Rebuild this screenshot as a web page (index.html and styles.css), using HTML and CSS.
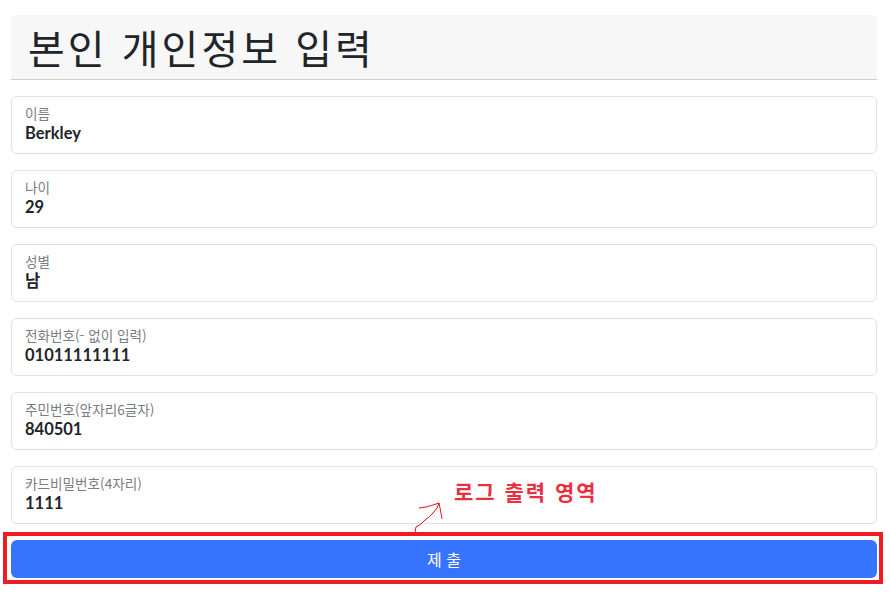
FILE: index.html
```html
<!DOCTYPE html>
<html lang="ko">
<head>
<meta charset="utf-8">
<title>본인 개인정보 입력</title>
<link rel="stylesheet" href="styles.css">
</head>
<body>
<div class="page">
  <header class="head">
    <h1 class="title">본인 개인정보 입력</h1>
  </header>
  <form class="form">
    <div class="field"><label class="lbl">이름</label><div class="val">Berkley</div></div>
    <div class="field"><label class="lbl">나이</label><div class="val">29</div></div>
    <div class="field"><label class="lbl">성별</label><div class="val">남</div></div>
    <div class="field"><label class="lbl">전화번호(- 없이 입력)</label><div class="val">01011111111</div></div>
    <div class="field"><label class="lbl">주민번호(앞자리6글자)</label><div class="val">840501</div></div>
    <div class="field"><label class="lbl">카드비밀번호(4자리)</label><div class="val">1111</div></div>
    <button type="button" class="submit">제 출</button>
  </form>
</div>
<div class="note">로그 출력 영역</div>
<svg class="arrow" width="40" height="40" viewBox="410 500 40 40">
  <polyline points="415,532 416,527 421,524 425,520 429,517 433,513 437,508 439,503" fill="none" stroke="#e8101c" stroke-width="1"/>
  <polyline points="419,508 426,507 433,505 439,503 440,508 441,513 442,519" fill="none" stroke="#e8101c" stroke-width="1"/>
</svg>
<div class="frame"></div>
</body>
</html>
```
FILE: styles.css
```css
html, body { margin: 0; padding: 0; background: #fff; }
body {
  font-family: "Lato", "Noto Sans CJK KR", sans-serif;
  color: #212529;
  position: relative;
  width: 890px;
  height: 592px;
  overflow: hidden;
}
.page {
  padding: 15px 13px 0 11px;
  display: flex;
  flex-direction: column;
  gap: 16px;
}
.head {
  background: #f7f7f7;
  border-bottom: 1px solid #cfcfcf;
  border-radius: 6px 6px 0 0;
  height: 64px;
  display: flex;
  align-items: center;
  padding-left: 17px;
}
.title {
  margin: 0;
  font-family: "Noto Sans CJK KR", sans-serif;
  font-weight: 400;
  font-size: 40px;
  line-height: 1;
  letter-spacing: 3px;
}
.form {
  display: flex;
  flex-direction: column;
  gap: 16px;
}
.field {
  box-sizing: border-box;
  height: 58px;
  border: 1px solid #dee2e6;
  border-radius: 6px;
  padding: 7px 13px;
  display: flex;
  flex-direction: column;
}
.lbl {
  font-family: "Noto Sans CJK KR", sans-serif;
  font-size: 13.6px;
  line-height: 18px;
  color: #7a7d81;
}
.val {
  font-family: "Lato", "Noto Sans CJK KR", sans-serif;
  font-weight: 700;
  font-size: 16.5px;
  line-height: 22px;
  color: #212529;
}
.submit {
  height: 38px;
  border: 0;
  border-radius: 6px;
  background: #3774fe;
  color: #fff;
  font-family: "Noto Sans CJK KR", sans-serif;
  font-size: 16px;
  padding: 0;
}
.note {
  position: absolute;
  left: 454px;
  top: 476px;
  font-family: "Noto Sans CJK KR", sans-serif;
  font-weight: 700;
  font-size: 21px;
  line-height: 30px;
  color: #ea3040;
  letter-spacing: 2px;
}
.arrow {
  position: absolute;
  left: 410px;
  top: 500px;
}
.frame {
  position: absolute;
  left: 3px;
  top: 532px;
  width: 880px;
  height: 52px;
  box-sizing: border-box;
  border: 4px solid #ee1c25;
}
```
